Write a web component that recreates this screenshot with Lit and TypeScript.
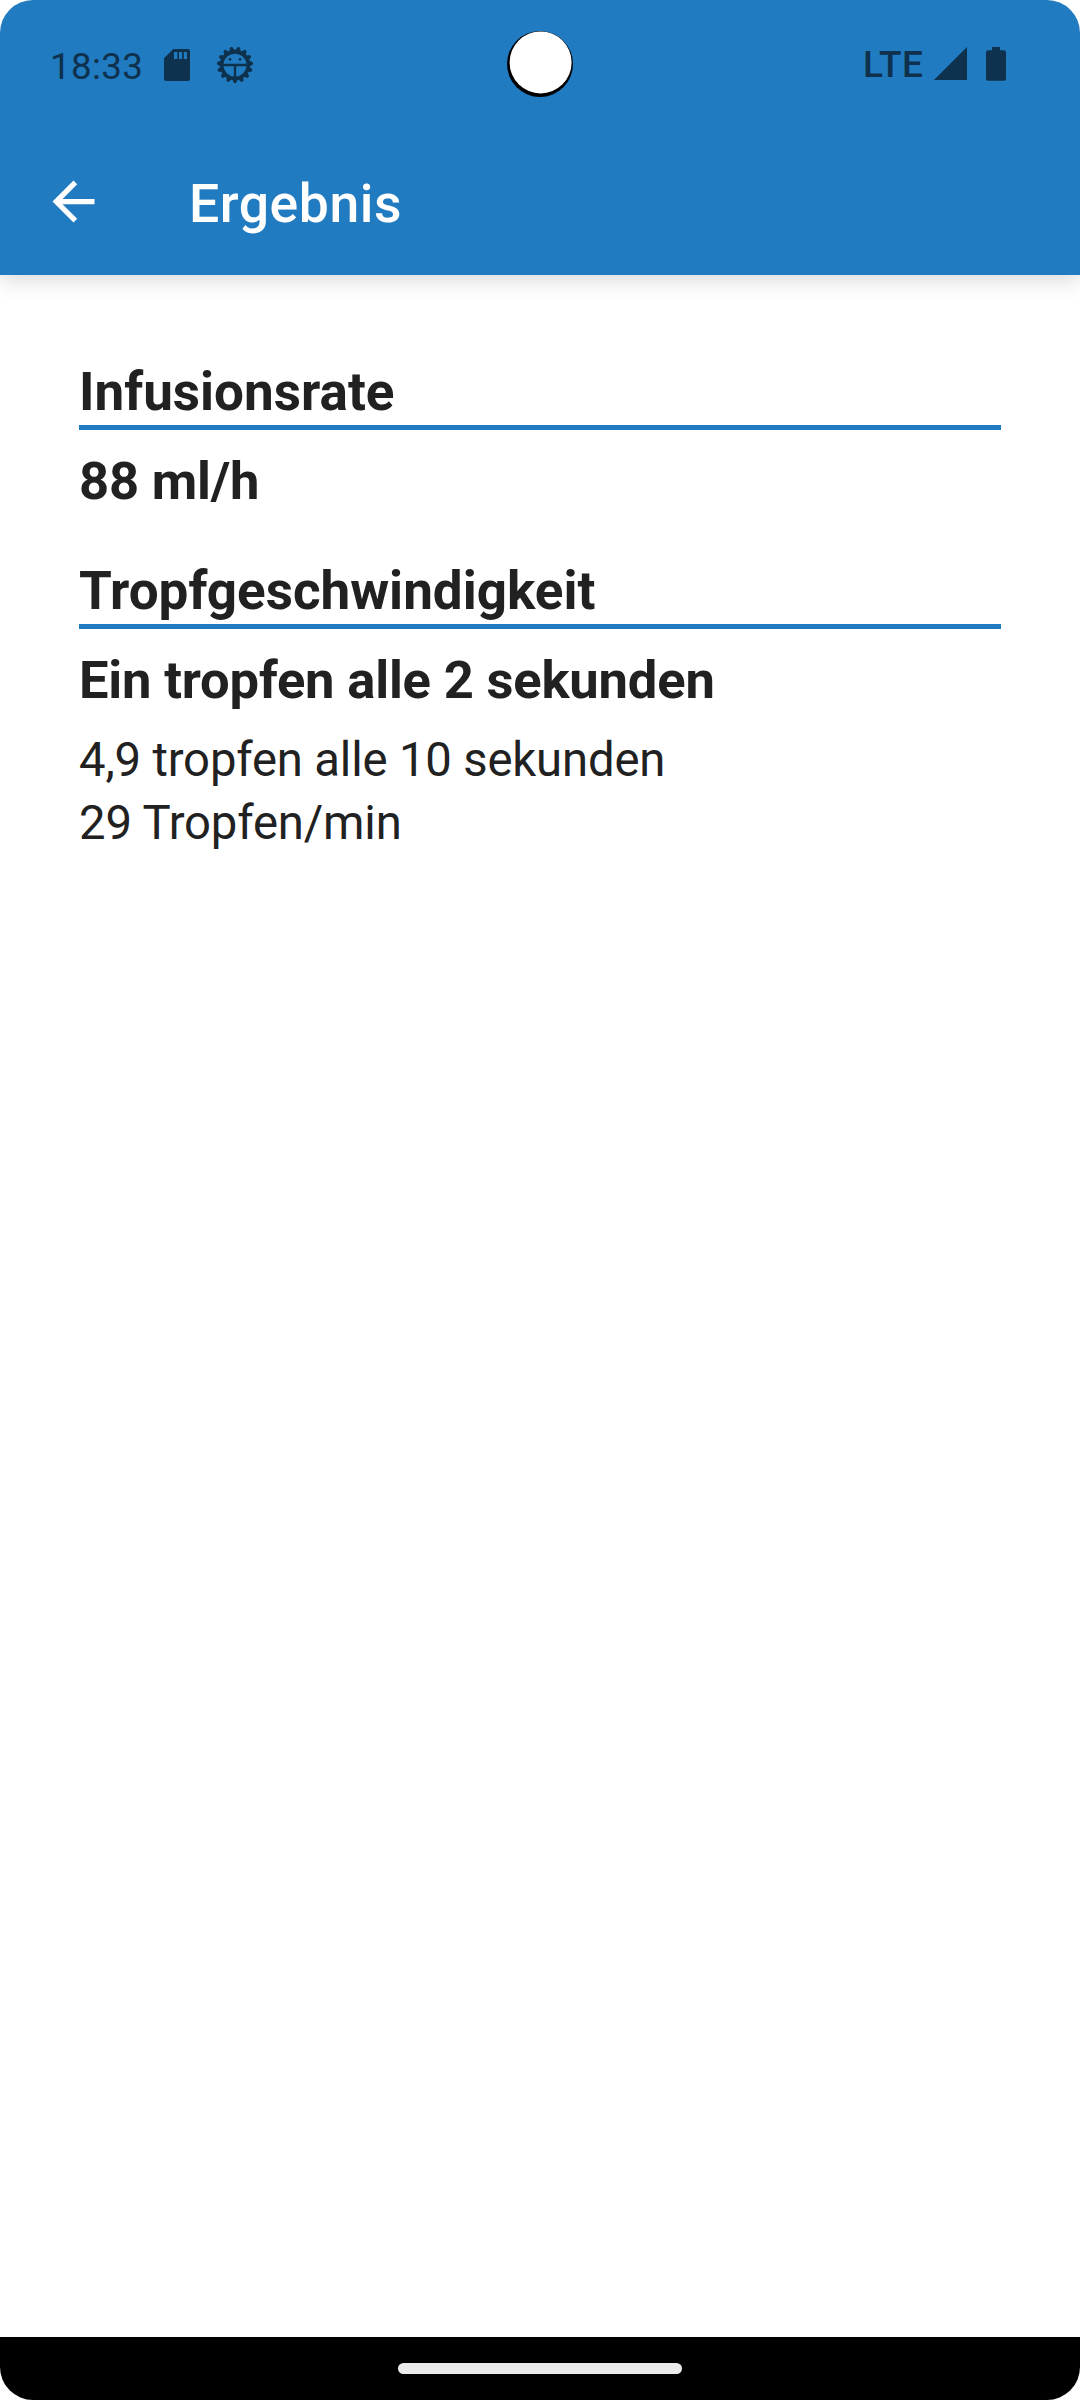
import { LitElement, html, css, svg } from "lit";
import { customElement, property } from "lit/decorators.js";

const TEETH = 15;

@customElement("status-bar")
class StatusBar extends LitElement {
  static styles = css`
    :host { display: flex; align-items: flex-start; height: 128px; box-sizing: border-box; padding: 44px 74px 0 50px; color: #0e314d; justify-content: space-between; position: relative; }
    .group { display: flex; align-items: flex-start; }
    .text { font-size: 36.75px; line-height: 44px; white-space: nowrap; }
    .clock { width: 91px; margin-top: 1px; letter-spacing: 0.35px; }
    .network { font-size: 37px; margin-top: -1px; font-weight: 500; width: 59px; letter-spacing: 0.5px; }
    svg { display: block; fill: currentColor; flex: none; }
    .card { margin: 5px 0 0 23px; }
    .bug { margin: 1px 0 0 25px; }
    .signal { margin: 3px 0 0 12px; }
    .battery { margin: 3px 0 0 19px; }
    .camera { position: absolute; left: 507px; top: 31px; }
  `;
  render() {
    const teeth = Array.from({ length: TEETH }, (_, i) =>
      svg`<path d="M-2.7 14 L-1.5 17.6 Q0 18.9 1.5 17.6 L2.7 14Z" transform="rotate(${(i * 360) / TEETH})"/>`);
    return html`
      <div class="group">
        <span class="text clock">18:33</span>
        <svg class="card" width="26" height="32" viewBox="0 0 26 32"><path fill-rule="evenodd" d="M9.3 0H24Q26 0 26 2V30Q26 32 24 32H2Q0 32 0 30V9.3ZM10 3V10H13.3V3ZM15 3V10H18V3ZM19.8 3V10H23V3Z"/></svg>
        <svg class="bug" width="40" height="40" viewBox="-20 -20 40 40">
          ${teeth}
          <path fill-rule="evenodd" d="M0-15.3A15.3 15.3 0 1 1 0 15.3A15.3 15.3 0 1 1 0-15.3ZM-11.5-1.2H11.5A11.6 11.6 0 0 0-11.5-1.2ZM-11.5 1.3A11.6 11.6 0 0 0-1.2 11.5V1.3ZM1.2 1.3V11.5A11.6 11.6 0 0 0 11.5 1.3Z"/>
          <circle cx="-5" cy="-5.7" r="1.4"/><circle cx="5" cy="-5.7" r="1.4"/>
        </svg>
      </div>
      <svg class="camera" width="66" height="66" viewBox="0 0 66 66"><circle cx="33" cy="33" r="33" fill="#000"/><circle cx="33.6" cy="31.4" r="31" fill="#fff"/></svg>
      <div class="group">
        <span class="text network">LTE</span>
        <svg class="signal" width="33" height="33" viewBox="0 0 33 33"><path d="M33 0V33H0Z"/></svg>
        <svg class="battery" width="20" height="34" viewBox="0 0 20 34"><path d="M6 0H14V3.3H18Q20 3.3 20 5.3V31.7Q20 33.7 18 33.7H2Q0 33.7 0 31.7V5.3Q0 3.3 2 3.3H6Z"/></svg>
      </div>`;
  }
}

@customElement("app-bar")
class AppBar extends LitElement {
  static styles = css`
    :host { display: flex; align-items: center; height: 147px; padding: 0 42px; box-sizing: border-box; color: #fff; }
    svg { display: block; fill: currentColor; }
    .title { margin: 5px 0 0 84px; font-size: 53.5px; line-height: 62px; font-weight: 500; letter-spacing: 0.55px; }
  `;
  @property() heading = "";
  render() {
    return html`<svg width="63" height="63" viewBox="0 0 24 24"><path d="M20 11H7.83l5.59-5.59L12 4l-8 8 8 8 1.41-1.41L7.83 13H20z"/></svg>
      <div class="title">${this.heading}</div>`;
  }
}

@customElement("result-section")
class ResultSection extends LitElement {
  static styles = css`
    :host { display: block; color: #212121; }
    .heading, .value { font-size: 52.5px; line-height: 62px; font-weight: 700; }
    .heading { padding-bottom: 2px; border-bottom: 5px solid #217bc0; font-size: 53px; }
    .value { margin-top: 20px; letter-spacing: -0.17px; }
    .details { margin-top: 18px; }
    .detail { font-size: 47.25px; line-height: 63px; letter-spacing: -0.17px; }
  `;
  @property() heading = "";
  @property() value = "";
  @property({ attribute: false }) details: string[] = [];
  render() {
    return html`<div class="heading">${this.heading}</div>
      <div class="value">${this.value}</div>
      ${this.details.length
        ? html`<div class="details">${this.details.map((d) => html`<div class="detail">${d}</div>`)}</div>`
        : null}`;
  }
}

@customElement("app-root")
class AppRoot extends LitElement {
  static styles = css`
    :host { display: block; width: 1080px; height: 2400px; background: #fff; font-family: Roboto, "Liberation Sans", sans-serif; }
    .screen { display: flex; flex-direction: column; height: 2400px; border-radius: 33px; overflow: hidden; background: #fff; }
    .top { background: #217bc0; height: 275px; box-shadow: 0 6px 20px rgba(0, 0, 0, 0.14); }
    .content { flex: 1; display: flex; flex-direction: column; gap: 48px; padding: 86px 79px 0; }
    .nav { height: 63px; background: #000; display: flex; justify-content: center; align-items: flex-start; }
    .pill { width: 284px; height: 11px; margin-top: 26px; border-radius: 5.5px; background: #ebebeb; }
  `;
  render() {
    return html`<div class="screen">
      <header class="top">
        <status-bar></status-bar>
        <app-bar heading="Ergebnis"></app-bar>
      </header>
      <main class="content">
        <result-section heading="Infusionsrate" value="88 ml/h"></result-section>
        <result-section
          heading="Tropfgeschwindigkeit"
          value="Ein tropfen alle 2 sekunden"
          .details=${["4,9 tropfen alle 10 sekunden", "29 Tropfen/min"]}
        ></result-section>
      </main>
      <footer class="nav"><div class="pill"></div></footer>
    </div>`;
  }
}
